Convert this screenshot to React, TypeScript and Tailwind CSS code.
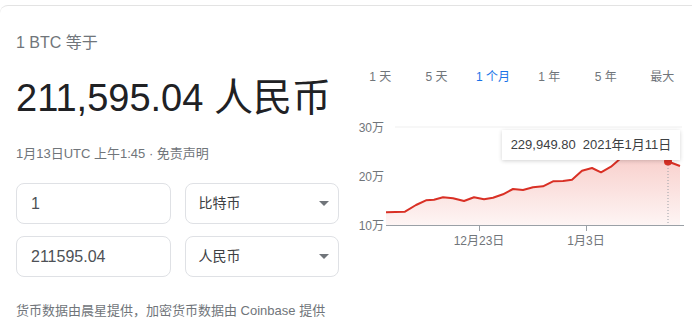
import {useState} from 'react';

const FONT = '"Liberation Sans", "Noto Sans CJK SC", sans-serif';

const RANGES = ['1 天', '5 天', '1 个月', '1 年', '5 年', '最大'];

// page coordinates, the svg is shifted by (-346, -110)
const POINTS: [number, number][] = [
    [386, 212.3], [405, 211.7], [416, 205], [426, 200.3], [434, 199.7], [443, 197.3],
    [453, 198.3], [464, 201], [474, 197.3], [484, 199.3], [493, 197.7], [503, 194.3],
    [513, 189], [523, 190], [533, 187.3], [543, 186.3], [553, 181.3], [563, 181],
    [572, 179.7], [582, 170.7], [592, 168], [601, 172.3], [611, 166.7], [619, 159.7],
    [627, 152], [635, 146], [643, 141], [651, 139], [659, 150], [668, 161.5], [680, 166],
];

function ConverterField({value}: {value: string}) {
    return (
        <div className="h-[41px] rounded-lg border border-[#dfe1e5] bg-white px-[14px] flex items-center text-[16px] text-[#4d5156]">
            {value}
        </div>
    );
}

function CurrencySelect({label}: {label: string}) {
    return (
        <div className="h-[41px] rounded-lg border border-[#dfe1e5] bg-white pl-[13px] pr-[9px] flex items-center justify-between text-[14px] text-[#3c4043]">
            <span>{label}</span>
            <span className="w-0 h-0 border-l-[5px] border-r-[5px] border-t-[5px] border-l-transparent border-r-transparent border-t-[#70757a]" />
        </div>
    );
}

function PriceChart() {
    const line = POINTS.map(([x, y], i) => `${i === 0 ? 'M' : 'L'}${x} ${y}`).join(' ');
    const area = `${line} L680 225 L386 225 Z`;
    return (
        <div className="relative w-[346px] h-[140px]">
            <svg width="346" height="140" className="block">
                <defs>
                    <linearGradient id="fill" x1="0" y1="130" x2="0" y2="225" gradientUnits="userSpaceOnUse">
                        <stop offset="0" stopColor="#ea6b60" stopOpacity="0.42" />
                        <stop offset="1" stopColor="#ea6b60" stopOpacity="0.07" />
                    </linearGradient>
                </defs>
                <g transform="translate(-346,-110)">
                    <line x1="395" y1="127" x2="682" y2="127" stroke="#efefef" strokeWidth="1" />
                    <path d={area} fill="url(#fill)" />
                    <path d={line} fill="none" stroke="#d93025" strokeWidth="2" strokeLinejoin="round" />
                    <line x1="668" y1="165" x2="668" y2="225" stroke="#9aa0a6" strokeWidth="1" strokeDasharray="1 2" />
                    <circle cx="668" cy="161.5" r="4" fill="#d93025" />
                    <line x1="386" y1="225.5" x2="684" y2="225.5" stroke="#9aa0a6" strokeWidth="1" />
                    <line x1="479.5" y1="225" x2="479.5" y2="231" stroke="#9aa0a6" strokeWidth="1" />
                    <line x1="586.5" y1="225" x2="586.5" y2="231" stroke="#9aa0a6" strokeWidth="1" />
                    <g fontFamily={FONT} fontSize="12" fill="#70757a">
                        <text x="384" y="131.5" textAnchor="end">30万</text>
                        <text x="384" y="180.5" textAnchor="end">20万</text>
                        <text x="384" y="230" textAnchor="end">10万</text>
                        <text x="479" y="244.5" textAnchor="middle">12月23日</text>
                        <text x="586" y="244.5" textAnchor="middle">1月3日</text>
                    </g>
                </g>
            </svg>
            {/* Tooltip */}
            <div className="absolute left-[156px] top-[20px] w-[178px] h-[30px] bg-white shadow-[0_1px_4px_rgba(0,0,0,0.18)] flex items-center justify-center gap-[7px] text-[13px] text-[#3c4043]">
                <span>229,949.80</span>
                <span>2021年1月11日</span>
            </div>
        </div>
    );
}

export default function App() {
    const [range, setRange] = useState(2);

    return (
        <div className="w-[692px] h-[336px] overflow-hidden bg-white" style={{fontFamily: FONT}}>
            <div className="mt-[5px] border-t border-[#e3e3e3] rounded-tl-lg flex">
                <div className="w-[346px] pl-4">
                    <div className="pt-[25px] text-[16px] leading-[24px] text-[#70757a]">1 BTC 等于</div>
                    <div className="mt-[19px] text-[38px] leading-[48px] text-[#202124]">
                        211,595.04 <span className="text-[39px]">人民币</span>
                    </div>
                    <div className="mt-[22px] text-[13px] leading-[20px] text-[#70757a]">
                        1月13日UTC 上午1:45 · 免责声明
                    </div>
                    <div className="mt-[19px] w-[323px] grid grid-cols-2 gap-x-[14px] gap-y-[12px]">
                        <ConverterField value="1" />
                        <CurrencySelect label="比特币" />
                        <ConverterField value="211595.04" />
                        <CurrencySelect label="人民币" />
                    </div>
                    <div className="mt-[24px] text-[13px] leading-[20px] text-[#70757a]">
                        货币数据由晨星提供，加密货币数据由 Coinbase 提供
                    </div>
                </div>
                <div className="w-[346px]">
                    <div className="mt-[61px] pl-[6px] flex">
                        {RANGES.map((r, i) => (
                            <button
                                key={r}
                                onClick={() => setRange(i)}
                                className={`w-[56.4px] h-[20px] text-[12px] leading-[20px] text-center ${i === range ? 'text-[#1a73e8]' : 'text-[#70757a]'}`}
                            >
                                {r}
                            </button>
                        ))}
                    </div>
                    <div className="mt-[23px]">
                        <PriceChart />
                    </div>
                </div>
            </div>
        </div>
    );
}
